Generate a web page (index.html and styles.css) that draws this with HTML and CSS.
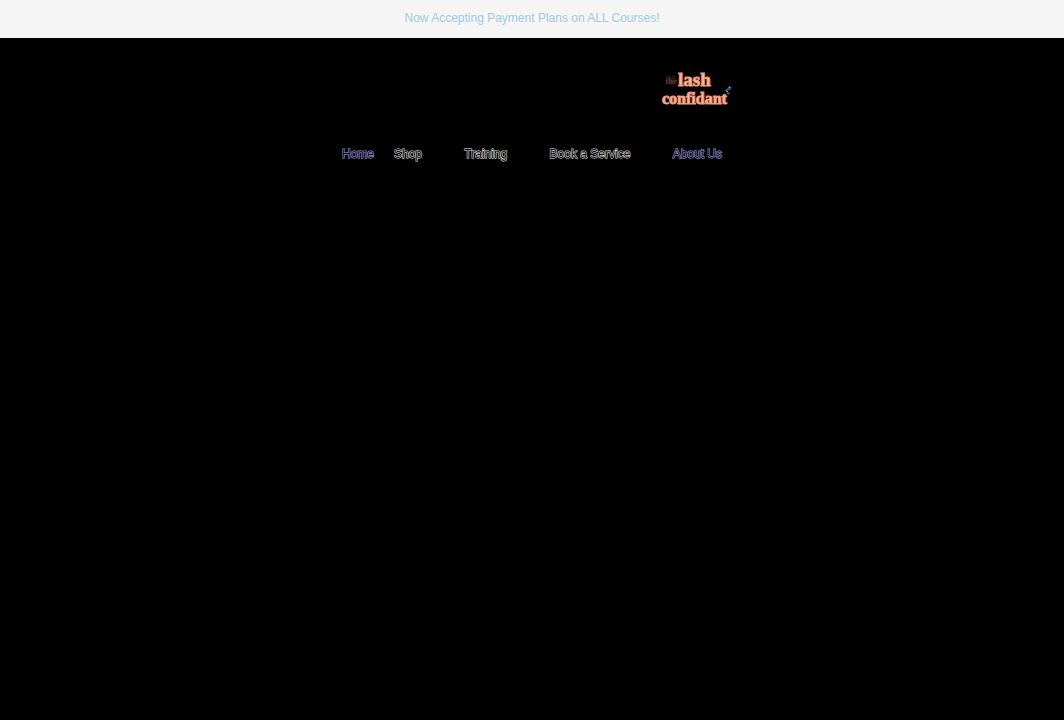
FILE: index.html
```html
<!DOCTYPE html>
<html lang="en">
<head>
<meta charset="utf-8">
<meta name="viewport" content="width=device-width, initial-scale=1">
<title>The Lash Confidant</title>
<link rel="stylesheet" href="styles.css">
</head>
<body>
<p class="announcement">Now Accepting Payment Plans on ALL Courses!</p>
<header class="header">
  <a class="logo" href="#">
    <svg width="72" height="46" viewBox="0 0 72 46" role="img" aria-label="The Lash Confidant">
      <path d="M6 10c2-2 4-1 5 1 2-2 5-1 5 1 0 3-3 6-4 8-3-2-6-5-6-10z" fill="#26110f"/>
      <g class="logo-text">
        <text class="logo-the" x="5" y="18">the</text>
        <text class="logo-lash" x="18" y="20">lash</text>
        <text class="logo-name" x="2" y="38">confidant</text>
      </g>
      <path d="M64 25l3-2 2-3 3 1-2 3-3 1zM66 27l3-1 1 2-2 1z" fill="#36536a"/>
      <path d="M66 25l2 1M69 21l1 1" stroke="#8fb4c4"/>
    </svg>
  </a>
  <nav class="nav" aria-label="Main">
    <a class="nav-link nav-home" href="#">Home</a>
    <div class="nav-group">
      <a class="nav-link" href="#">Shop</a>
      <a class="nav-link" href="#">Training</a>
      <a class="nav-link" href="#">Book a Service</a>
      <a class="nav-link nav-about" href="#">About Us</a>
    </div>
  </nav>
</header>
</body>
</html>
```
FILE: styles.css
```css
body {
  margin: 0;
  min-height: 100vh;
  background: #000;
  font-family: "Liberation Sans", Arial, sans-serif;
}

.announcement {
  margin: 0;
  padding: 9px 16px 11px;
  background: #f5f5f5;
  color: #9ccbdc;
  font-size: 12px;
  line-height: 18px;
  text-align: center;
}

.header {
  display: flex;
  flex-direction: column;
  max-width: 400px;
  margin: 0 auto;
  padding-top: 28px;
}

.logo {
  align-self: flex-end;
  line-height: 0;
}

.logo-text {
  font-family: "Liberation Serif", serif;
  font-weight: bold;
  fill: #f9b99b;
  stroke: #f09a78;
  stroke-width: 1px;
}

.logo-the {
  font-size: 9px;
  fill: #5c3c35;
  stroke: none;
}

.logo-lash {
  font-size: 19px;
}

.logo-name {
  font-size: 16px;
}

.nav {
  display: flex;
  gap: 20px;
  padding: 32px 10px 0;
}

.nav-group {
  display: flex;
  flex: 1;
  justify-content: space-between;
}

.nav-link {
  color: #000;
  font-size: 12px;
  line-height: 20px;
  text-decoration: none;
  white-space: nowrap;
  -webkit-text-stroke: 1px #f0f0f0;
  paint-order: stroke fill;
}

.nav-home,
.nav-about {
  -webkit-text-stroke-color: #b3acff;
}
```
